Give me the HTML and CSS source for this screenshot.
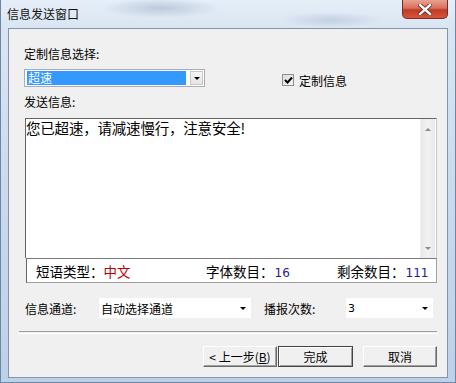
FILE: index.html
```html
<!DOCTYPE html>
<html lang="zh-CN">
<head>
    <meta charset="UTF-8">
    <title>信息发送窗口</title>
    <link rel="stylesheet" href="styles.css">
</head>
<body>
    <div class="window">
        <!-- Title bar -->
        <div class="titlebar">
            <span class="title">信息发送窗口</span>
            <div class="close">
                <svg width="14" height="11" viewBox="0 0 14 11">
                    <path d="M2 1 L12 10 M12 1 L2 10" stroke="#5a2a22" stroke-width="4" stroke-linecap="square"/>
                    <path d="M2 1 L12 10 M12 1 L2 10" stroke="#fff" stroke-width="2.4" stroke-linecap="square"/>
                </svg>
            </div>
        </div>

        <!-- Client area -->
        <div class="client">
            <div class="label first">定制信息选择:</div>

            <div class="select-row">
                <div class="combo-edit">
                    <span class="combo-value">超速</span>
                    <span class="combo-btn"><span class="arrow-down"></span></span>
                </div>
                <div class="check">
                    <span class="check-box">
                        <svg width="9" height="9" viewBox="0 0 9 9">
                            <path d="M1 4 L3.5 6.5 L8 1.5" stroke="#000" stroke-width="2" fill="none"/>
                        </svg>
                    </span>
                    <span>定制信息</span>
                </div>
            </div>

            <div class="label second">发送信息:</div>

            <!-- Message box -->
            <div class="memo">
                <div class="memo-text">您已超速，请减速慢行，注意安全!</div>
                <div class="scrollbar">
                    <span class="sb-arrow up"></span>
                    <span class="sb-arrow down"></span>
                </div>
            </div>

            <div class="status">
                <span class="stat">短语类型：<span class="red">中文</span></span>
                <span class="stat">字体数目：<span class="num">16</span></span>
                <span class="stat">剩余数目：<span class="num">111</span></span>
            </div>

            <!-- Options -->
            <div class="options">
                <span class="opt-label">信息通道:</span>
                <div class="combo-flat wide">
                    <span>自动选择通道</span>
                    <span class="arrow-down"></span>
                </div>
                <span class="opt-label second">播报次数:</span>
                <div class="combo-flat narrow">
                    <span class="num-black">3</span>
                    <span class="arrow-down"></span>
                </div>
            </div>

            <div class="separator"></div>

            <!-- Buttons -->
            <div class="buttons">
                <button class="btn">&lt; 上一步(<u>B</u>)</button>
                <button class="btn default">完成</button>
                <button class="btn cancel">取消</button>
            </div>
        </div>
    </div>
</body>
</html>
```

FILE: styles.css
```css
/* Global */
body {
    margin: 0;
    font-family: "Noto Sans CJK SC", "Liberation Sans", sans-serif;
    font-size: 12px;
    color: #000;
    background: #fff;
}

.window {
    width: 456px;
    height: 383px;
    box-sizing: border-box;
    padding: 0 7px 0 7px;
    display: flex;
    flex-direction: column;
    border-left: 1px solid #6f86a3;
    border-right: 1px solid #6f86a3;
    border-bottom: 1px solid #6f86a3;
    background:
        radial-gradient(ellipse 60px 10px at 160px 8px, rgba(120, 140, 170, 0.35), transparent),
        radial-gradient(ellipse 50px 8px at 330px 20px, rgba(120, 140, 170, 0.25), transparent),
        linear-gradient(180deg, #e6eef8 0, #d9e5f3 28px, #c6d8ed 60%, #bcd1ea 100%);
}

/* Title bar */
.titlebar {
    height: 28px;
    display: flex;
    align-items: flex-start;
    flex-shrink: 0;
}

.title {
    margin-top: 7px;
    margin-left: -1px;
    line-height: 14px;
    font-size: 12px;
    color: #111;
}

.close {
    margin-left: auto;
    width: 46px;
    height: 19px;
    box-sizing: border-box;
    display: flex;
    align-items: center;
    justify-content: center;
    border: 1px solid #7a2a20;
    border-top: none;
    border-radius: 0 0 5px 5px;
    background: linear-gradient(180deg, #eba192 0, #d9705b 45%, #c23a24 55%, #d4553a 100%);
}

/* Client area */
.client {
    height: 350px;
    box-sizing: border-box;
    border: 1px solid #8495aa;
    background: #f0f0f0;
    padding: 17px 10px 0 16px;
    display: flex;
    flex-direction: column;
}

.label {
    height: 16px;
    line-height: 16px;
    margin-left: -1px;
}

.label.second {
    margin-top: 7px;
}

/* First row */
.select-row {
    margin-top: 7px;
    height: 18px;
    display: flex;
    align-items: center;
}

.combo-edit {
    width: 181px;
    height: 18px;
    margin-left: -1px;
    box-sizing: border-box;
    border: 1px solid #abadb3;
    background: #fff;
    display: flex;
    align-items: center;
    padding: 1px 1px 1px 2px;
}

.combo-value {
    width: 159px;
    height: 14px;
    line-height: 14px;
    background: #3399ff;
    color: #fff;
    padding-left: 1px;
    box-sizing: border-box;
}

.combo-btn {
    margin-left: auto;
    width: 13px;
    height: 14px;
    box-sizing: border-box;
    border: 1px solid #c9c9c9;
    background: linear-gradient(180deg, #f7f7f7, #e4e4e4);
    display: flex;
    align-items: center;
    justify-content: center;
}

.arrow-down {
    width: 0;
    height: 0;
    border-left: 3px solid transparent;
    border-right: 3px solid transparent;
    border-top: 3px solid #000;
}

.check {
    margin-left: 77px;
    margin-top: 4px;
    display: flex;
    align-items: center;
    gap: 5px;
}

.check-box {
    width: 12px;
    height: 12px;
    box-sizing: border-box;
    border: 1px solid #8e8f8f;
    background: linear-gradient(135deg, #dcdcdc, #f6f6f6);
    display: flex;
    align-items: center;
    justify-content: center;
}

/* Message box */
.memo {
    margin-top: 8px;
    height: 140px;
    box-sizing: border-box;
    border-top: 1px solid #646464;
    border-left: 1px solid #646464;
    border-right: 1px solid #c8c8c8;
    background: #fff;
    display: flex;
}

.memo-text {
    flex: 1;
    font-size: 14.5px;
    line-height: 17px;
    letter-spacing: -0.2px;
}

.scrollbar {
    width: 14px;
    margin-right: 1px;
    background: linear-gradient(90deg, #e8e8e8, #f2f2f2 50%, #e8e8e8);
    border-left: 1px solid #efefef;
    display: flex;
    flex-direction: column;
    justify-content: space-between;
    align-items: center;
    padding: 9px 0 8px;
}

.sb-arrow {
    width: 0;
    height: 0;
    border-left: 3px solid transparent;
    border-right: 3px solid transparent;
}

.sb-arrow.up {
    border-bottom: 3px solid #8a8a8a;
}

.sb-arrow.down {
    border-top: 3px solid #8a8a8a;
}

/* Status row */
.status {
    margin-left: 1px;
    height: 25px;
    box-sizing: border-box;
    border: 1px solid #a0a0a0;
    border-top-color: #7a7a7a;
    border-left-color: #646464;
    background: #fff;
    display: grid;
    grid-template-columns: 170px 131px 1fr;
    align-items: center;
    padding-left: 9px;
    font-size: 13.5px;
}

.red {
    color: #c00000;
}

.num {
    font-family: "DejaVu Sans", sans-serif;
    font-size: 12px;
    color: #1c1c9c;
    margin-left: 1px;
}

/* Options row */
.options {
    margin-top: 15px;
    height: 20px;
    display: flex;
    align-items: center;
}

.opt-label {
    width: 74px;
}

.opt-label.second {
    width: 82px;
    margin-left: 13px;
}

.combo-flat {
    height: 20px;
    box-sizing: border-box;
    background: #fff;
    display: flex;
    align-items: center;
    justify-content: space-between;
    padding: 0 5px 0 2px;
}

.combo-flat.wide {
    width: 152px;
}

.combo-flat.narrow {
    width: 87px;
}

.num-black {
    font-family: "DejaVu Sans", sans-serif;
    font-size: 11px;
}

.separator {
    margin-top: 13px;
    margin-left: -6px;
    height: 1px;
    border-top: 1px solid #a0a0a0;
    border-bottom: 1px solid #fff;
}

/* Buttons */
.buttons {
    margin-top: 12px;
    display: flex;
    justify-content: flex-end;
}

.btn {
    width: 74px;
    height: 21px;
    box-sizing: border-box;
    padding: 0;
    font-family: "Noto Sans CJK SC", sans-serif;
    font-size: 12px;
    line-height: 17px;
    color: #000;
    background: #f0f0f0;
    border: 1px solid;
    border-color: #fff #696969 #696969 #fff;
    box-shadow: inset -1px -1px 0 #a0a0a0;
}

.btn.default {
    width: 75px;
    margin-left: 1px;
    border-color: #444;
    box-shadow: inset 1px 1px 0 #fff, inset -1px -1px 0 #a0a0a0;
}

.btn.cancel {
    margin-left: 10px;
}
```
